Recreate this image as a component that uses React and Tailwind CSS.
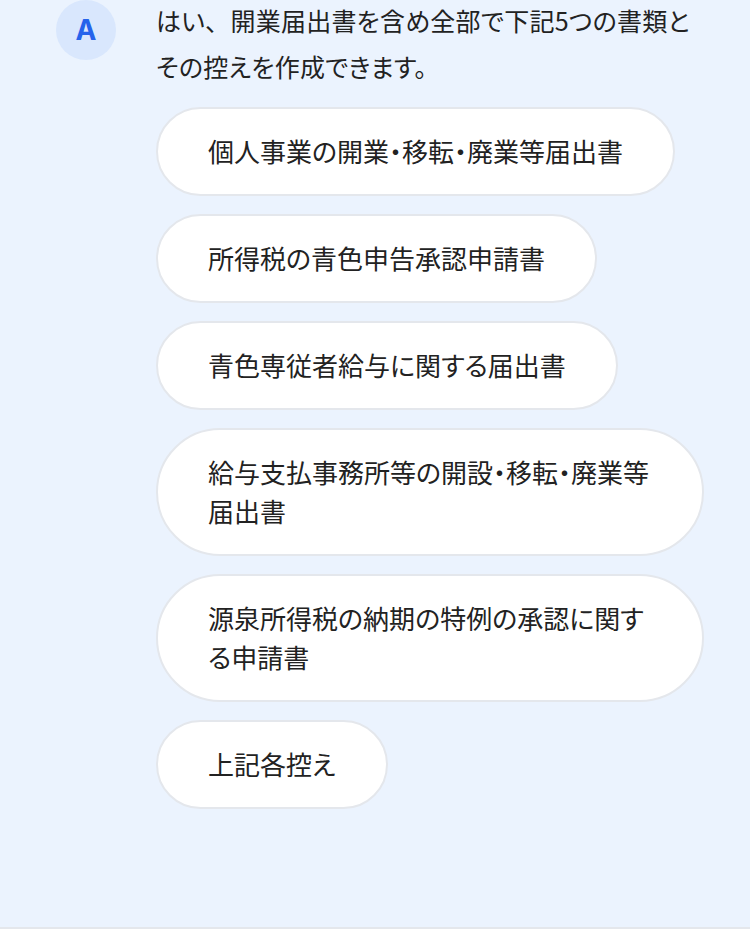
import React from 'react';

const documents = [
  '個人事業の開業・移転・廃業等届出書',
  '所得税の青色申告承認申請書',
  '青色専従者給与に関する届出書',
  '給与支払事務所等の開設・移転・廃業等届出書',
  '源泉所得税の納期の特例の承認に関する申請書',
  '上記各控え',
];

const fontStack = {
  fontFamily: '"Noto Sans CJK JP", "Noto Sans", sans-serif',
  fontFeatureSettings: '"palt"',
};

const App = () => {
  return (
    <div
      className="h-[929px] w-[750px] bg-[#ebf3fe] border-b-2 border-[#e4e7ec] overflow-hidden"
      style={fontStack}
    >
      <div className="flex pl-[56px] pr-[46px]">
        {/* Avatar */}
        <div className="flex items-center justify-center w-[60px] h-[60px] shrink-0 rounded-full bg-[#d9e7fd]">
          <span
            className="text-[28px] font-bold text-[#2563eb] leading-none"
            style={{ fontFamily: 'Inter, "Noto Sans", sans-serif' }}
          >
            A
          </span>
        </div>

        {/* Answer */}
        <div className="ml-[40px] flex-1 min-w-0">
          <p className="-mt-[3px] text-[25px] leading-[46px] tracking-[0.01em] text-[#222222]">
            はい<span style={{ fontFeatureSettings: 'normal' }}>、</span>開業届出書を含め全部で下記5つの書類と
            <br />
            その控えを作成できます。
          </p>

          <div className="mt-[18px] flex flex-col items-start gap-[18px]">
            {documents.map((doc) => (
              <div
                key={doc}
                className="max-w-full rounded-full border-2 border-[#e4e7ec] bg-white px-[50px] pt-[22px] pb-[24px] text-[26px] leading-[39px] text-[#222222]"
              >
                {doc}
              </div>
            ))}
          </div>
        </div>
      </div>
    </div>
  );
};

export default App;
